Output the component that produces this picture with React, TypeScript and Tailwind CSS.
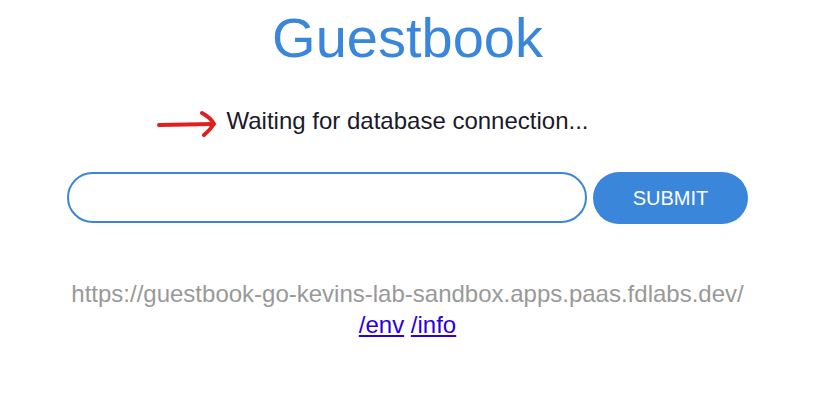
export default function App() {
  return (
    <div className="min-h-[395px] bg-white text-center" style={{ fontFamily: '"Liberation Sans", Arial, sans-serif' }}>
      <h1 className="pt-[6px] text-[56px] leading-[64px] text-[#3a86db]">Guestbook</h1>

      <div className="mt-[31px] flex justify-center">
        <p className="relative text-[24px] leading-[40px] text-[#1a1a2a]">
          <svg
            className="absolute left-[-71px] top-[8px]"
            width="62"
            height="28"
            viewBox="0 0 62 28"
            fill="none"
            stroke="#e21f1f"
            strokeWidth="4"
            strokeLinecap="round"
            strokeLinejoin="round"
          >
            <path d="M3 16 L57 15" />
            <path d="M46 4 Q55 9 58 15 Q54 21 48 26" />
          </svg>
          Waiting for database connection...
        </p>
      </div>

      <form className="mt-[31px] flex items-start justify-center gap-[6px]" onSubmit={(e) => e.preventDefault()}>
        <input
          className="h-[51px] w-[520px] rounded-full border-2 border-[#3a86db] bg-white px-5 text-[20px] outline-none"
          type="text"
        />
        <button
          type="submit"
          className="h-[52px] w-[155px] rounded-full bg-[#3a86db] text-[20px] text-white"
        >
          SUBMIT
        </button>
      </form>

      <div className="mt-[54px] text-[24px] leading-[31px] text-[#999999]">
        <p>https://guestbook-go-kevins-lab-sandbox.apps.paas.fdlabs.dev/</p>
        <p>
          <a href="#" className="text-[#2b00e0] underline">/env</a>{" "}
          <a href="#" className="text-[#2b00e0] underline">/info</a>
        </p>
      </div>
    </div>
  );
}
